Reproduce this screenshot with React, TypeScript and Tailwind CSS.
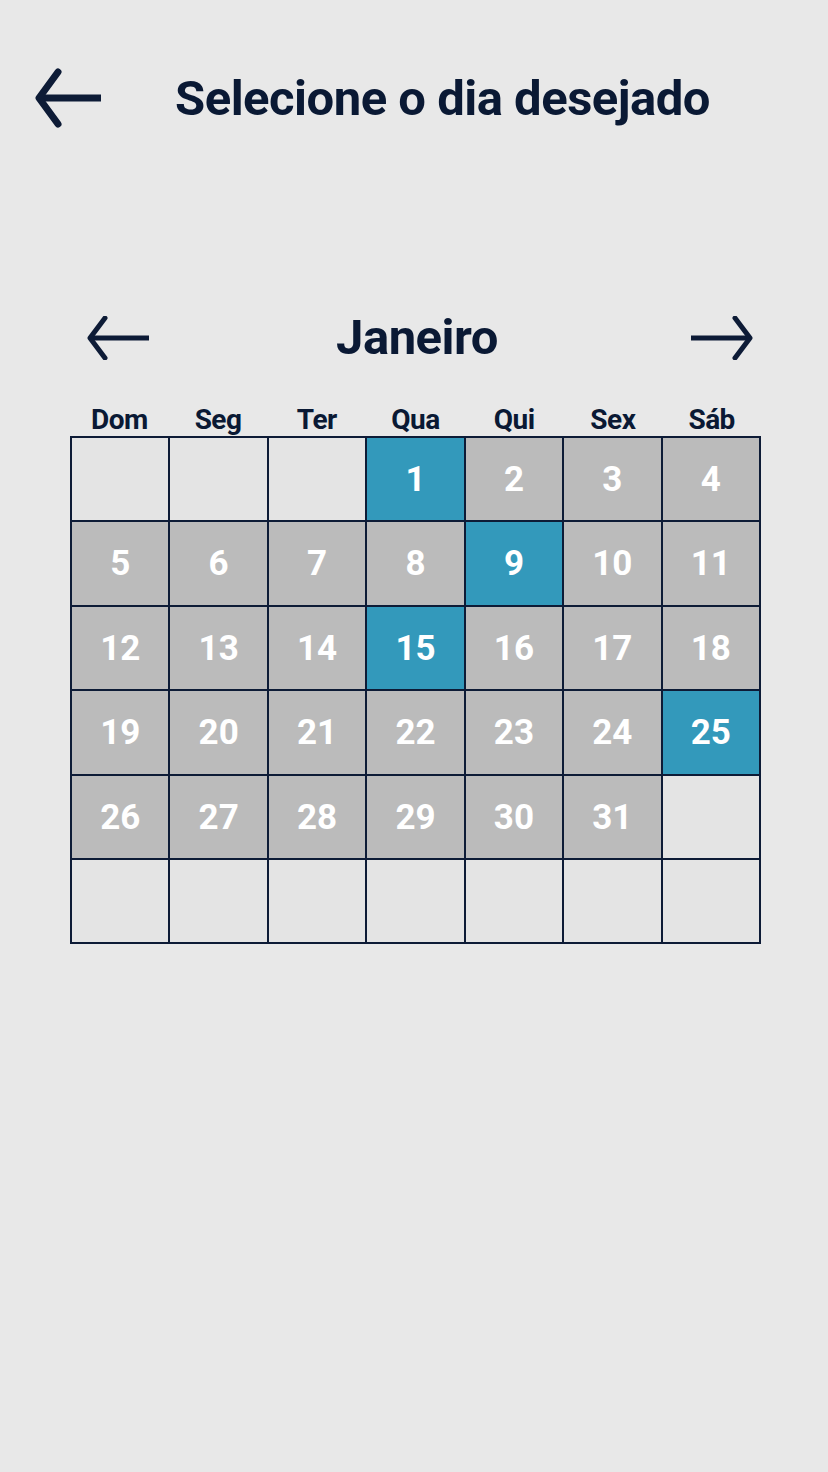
import React from 'react';

const navy = '#0d1b36';

const days: (number | null)[] = [
  null, null, null, 1, 2, 3, 4,
  5, 6, 7, 8, 9, 10, 11,
  12, 13, 14, 15, 16, 17, 18,
  19, 20, 21, 22, 23, 24, 25,
  26, 27, 28, 29, 30, 31, null,
  null, null, null, null, null, null, null,
];

const available = [1, 9, 15, 25];
const weekDays = ['Dom', 'Seg', 'Ter', 'Qua', 'Qui', 'Sex', 'Sáb'];

function Arrow({ dir, className }: { dir: 'left' | 'right'; className: string }) {
  return (
    <svg viewBox="0 0 64 44" className={className} fill="none" stroke={navy} strokeWidth={5} strokeLinecap="round" strokeLinejoin="round">
      {dir === 'left' ? (
        <>
          <path d="M63 22H4" strokeLinecap="butt" />
          <path d="M19 2L4 22L19 42" />
        </>
      ) : (
        <>
          <path d="M1 22H60" strokeLinecap="butt" />
          <path d="M45 2L60 22L45 42" />
        </>
      )}
    </svg>
  );
}

export default function App() {
  return (
    <div
      className="w-[828px] h-[1472px] bg-[#e8e8e8] text-[#0a1934]"
      style={{ fontFamily: 'Roboto, "Liberation Sans", sans-serif' }}
    >
      <div className="flex items-center pt-[68px] pl-[33px]">
        <svg viewBox="0 0 68 60" className="w-[68px] h-[60px]" fill="none" stroke={navy} strokeWidth={7} strokeLinejoin="round">
          <path d="M68 30H6" />
          <path d="M25 4L6 30L25 56" strokeLinecap="round" />
        </svg>
        <h1 className="ml-[74px] text-[49px] font-bold tracking-[-0.5px] leading-none">
          Selecione o dia desejado
        </h1>
      </div>

      <div className="flex items-center justify-between mt-[185px] pl-[86px] pr-[74px]">
        <Arrow dir="left" className="w-[64px] h-[44px]" />
        <span className="text-[49px] font-bold leading-none tracking-[-0.5px] mr-[6px]">Janeiro</span>
        <Arrow dir="right" className="w-[64px] h-[44px]" />
      </div>

      <div className="ml-[70px] mt-[41px] w-[691px]">
        <div className="grid grid-cols-7 h-[33px] items-center">
          {weekDays.map((d) => (
            <span key={d} className="text-center text-[28px] font-bold leading-none tracking-[-0.5px]">
              {d}
            </span>
          ))}
        </div>
        <div className="grid grid-cols-7 gap-[2px] p-[2px] bg-[#0d1b36]">
          {days.map((d, i) => (
            <div
              key={i}
              className={
                'h-[82.4px] flex items-center justify-center pt-[2px] text-[35px] font-bold text-white ' +
                (d === null ? 'bg-[#e4e4e4]' : available.includes(d) ? 'bg-[#3399bb]' : 'bg-[#bbbbbb]')
              }
            >
              {d}
            </div>
          ))}
        </div>
      </div>
    </div>
  );
}
